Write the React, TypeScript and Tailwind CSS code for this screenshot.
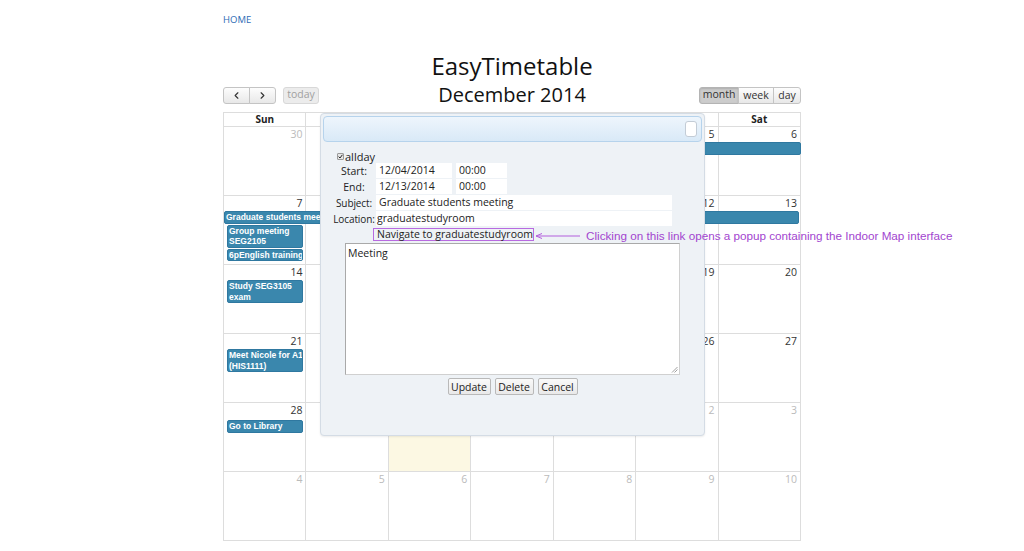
import { ReactElement } from "react";
import { ChevronLeft, ChevronRight } from "lucide-react";

type Ev = { title: ReactElement | string; col: number; span: number; row: number; cls?: string };

type Week = { days: { n: number; other?: boolean; today?: boolean }[]; events: Ev[] };

const colStart: Record<number, string> = {
  1: "col-start-1",
  2: "col-start-2",
  3: "col-start-3",
  4: "col-start-4",
  5: "col-start-5",
  6: "col-start-6",
  7: "col-start-7",
};

const colSpan: Record<number, string> = {
  1: "col-span-1",
  2: "col-span-2",
  3: "col-span-3",
  4: "col-span-4",
  5: "col-span-5",
  6: "col-span-6",
  7: "col-span-7",
};

const rowStart: Record<number, string> = {
  2: "row-start-2",
  3: "row-start-3",
  4: "row-start-4",
};

const weeks: Week[] = [
  {
    days: [{ n: 30, other: true }, { n: 1 }, { n: 2 }, { n: 3 }, { n: 4 }, { n: 5 }, { n: 6 }],
    events: [{ title: "Graduate students meeting", col: 5, span: 3, row: 2, cls: "ml-[2px]" }],
  },
  {
    days: [{ n: 7 }, { n: 8 }, { n: 9 }, { n: 10 }, { n: 11 }, { n: 12 }, { n: 13 }],
    events: [
      { title: "Graduate students meeting", col: 1, span: 7, row: 2, cls: "mr-[2px]" },
      {
        title: (
          <>
            Group meeting
            <br />
            SEG2105
          </>
        ),
        col: 1,
        span: 1,
        row: 3,
        cls: "mx-[3px]",
      },
      { title: "6pEnglish training", col: 1, span: 1, row: 4, cls: "mx-[3px]" },
    ],
  },
  {
    days: [{ n: 14 }, { n: 15 }, { n: 16 }, { n: 17 }, { n: 18 }, { n: 19 }, { n: 20 }],
    events: [
      {
        title: (
          <>
            Study SEG3105
            <br />
            exam
          </>
        ),
        col: 1,
        span: 1,
        row: 2,
        cls: "mx-[3px]",
      },
    ],
  },
  {
    days: [{ n: 21 }, { n: 22 }, { n: 23 }, { n: 24 }, { n: 25 }, { n: 26 }, { n: 27 }],
    events: [
      {
        title: (
          <>
            Meet Nicole for A1
            <br />
            (HIS1111)
          </>
        ),
        col: 1,
        span: 1,
        row: 2,
        cls: "mx-[3px]",
      },
    ],
  },
  {
    days: [
      { n: 28 },
      { n: 29 },
      { n: 30, today: true },
      { n: 31 },
      { n: 1, other: true },
      { n: 2, other: true },
      { n: 3, other: true },
    ],
    events: [{ title: "Go to Library", col: 1, span: 1, row: 2, cls: "mx-[3px] mt-[2px]" }],
  },
  {
    days: [4, 5, 6, 7, 8, 9, 10].map((n) => ({ n, other: true })),
    events: [],
  },
];

const dayNames = ["Sun", "Mon", "Tue", "Wed", "Thu", "Fri", "Sat"];

const btn =
  "h-[17px] border border-[#c4c4c4] bg-gradient-to-b from-[#fdfdfd] to-[#e8e8e8] text-[10.5px] leading-none text-[#333] flex items-center justify-center";

const formBtn =
  "flex h-[17px] items-center justify-center rounded-[2px] border border-[#b9b9b9] bg-gradient-to-b from-[#fafafa] to-[#e9e9e9]";

const App = (): ReactElement => {
  return (
    <div className="relative min-h-[551px] overflow-hidden bg-white font-['Open_Sans',sans-serif] text-[#333]">
      <div className="ml-[223px] w-[578px]">
        {/* top link */}
        <div className="pt-[14px] h-[26px] text-[9.5px] leading-[12px] text-[#2d6cb5]">HOME</div>

        <h1 className="mt-[26px] h-[28px] text-center text-[24px] leading-[28px] text-[#111]">EasyTimetable</h1>

        {/* toolbar */}
        <div className="mt-[3px] grid h-[24px] grid-cols-[1fr_auto_1fr] items-center">
          <div className="flex items-center gap-[7px]">
            <div className="flex">
              <div className={`${btn} w-[27px] rounded-l-[3px]`}>
                <ChevronLeft size={11} strokeWidth={2.5} />
              </div>
              <div className={`${btn} w-[27px] -ml-px rounded-r-[3px]`}>
                <ChevronRight size={11} strokeWidth={2.5} />
              </div>
            </div>
            <div className="flex h-[17px] w-[36px] items-center justify-center rounded-[3px] border border-[#d8d8d8] bg-[#ececec] text-[10.5px] text-[#a0a0a0]">
              today
            </div>
          </div>
          <h2 className="text-center text-[20px] leading-[24px] text-[#111]">December 2014</h2>
          <div className="flex justify-end">
            <div className="flex h-[17px] w-[40px] items-center justify-center rounded-l-[3px] border border-[#b4b4b4] bg-[#cccccc] text-[10.5px] text-[#333] shadow-[inset_0_1px_2px_rgba(0,0,0,0.15)]">
              month
            </div>
            <div className={`${btn} -ml-px w-[36px]`}>week</div>
            <div className={`${btn} -ml-px w-[28px] rounded-r-[3px]`}>day</div>
          </div>
        </div>

        {/* calendar grid */}
        <div className="mt-[5px] border-l border-t border-[#dddddd]">
          <div className="grid h-[14px] grid-cols-7">
            {dayNames.map((d) => (
              <div
                key={d}
                className="border-b border-r border-[#dddddd] text-center text-[10px] font-bold leading-[13px] text-[#222]"
              >
                {d}
              </div>
            ))}
          </div>
          {weeks.map((w, wi) => (
            <div key={wi} className="grid h-[69px] grid-cols-7 grid-rows-[15px_auto_auto_auto_1fr]">
              {w.days.map((d, di) => (
                <div
                  key={di}
                  className={`${colStart[di + 1]} row-span-full border-b border-r border-[#dddddd] ${
                    d.today ? "bg-[#fcf8e3]" : "bg-white"
                  }`}
                >
                  <div
                    className={`pr-[3px] pt-[1px] text-right text-[10.5px] leading-[13px] ${
                      d.other ? "text-[#bbbbbb]" : "text-[#333]"
                    }`}
                  >
                    {d.n}
                  </div>
                </div>
              ))}
              {w.events.map((e, ei) => (
                <div
                  key={ei}
                  className={`${colStart[e.col]} ${colSpan[e.span]} ${rowStart[e.row]} mb-[1px] overflow-hidden whitespace-nowrap rounded-[2px] border border-[#2f78a0] bg-[#3a87ad] px-[1px] font-['Liberation_Sans',sans-serif] text-[8.5px] font-bold leading-[10.5px] text-white ${
                    e.cls ?? ""
                  }`}
                >
                  {e.title}
                </div>
              ))}
            </div>
          ))}
        </div>
      </div>

      {/* event editor popup */}
      <div className="absolute left-[320px] top-[113px] h-[323px] w-[385px] rounded-[4px] border border-[#d4dce5] bg-[#eef2f6] p-[2px] shadow-[0_1px_2px_rgba(0,0,0,0.08)]">
        <div className="flex h-[26px] items-center justify-end rounded-[4px] border border-[#b6d3ec] bg-gradient-to-b from-[#eef5fc] to-[#d9e9f7] pr-[4px]">
          <div className="h-[16px] w-[12px] rounded-[3px] border border-[#c3ccd6] bg-white" />
        </div>

        <div className="pl-[9px] pt-[8px] text-[10.5px] leading-[12px] text-[#222]">
          <div className="flex h-[13px] items-center gap-[1px] pl-[5px]">
            <div className="flex h-[7px] w-[7px] items-center justify-center rounded-[1px] border border-[#9a9a9a] bg-[#e6e6e6]">
              <svg width="5" height="5" viewBox="0 0 5 5">
                <path d="M0.6 2.6 L2 4 L4.4 0.8" fill="none" stroke="#222" strokeWidth="1" />
              </svg>
            </div>
            <span className="text-[11px]">allday</span>
          </div>

          <div className="grid grid-cols-[44px_auto] items-center gap-y-[1px]">
            <div className="text-center">Start:</div>
            <div className="flex h-[15px] gap-[4px]">
              <div className="w-[76px] bg-white pl-[3px] leading-[15px]">12/04/2014</div>
              <div className="w-[51px] bg-white pl-[3px] leading-[15px]">00:00</div>
            </div>
            <div className="text-center">End:</div>
            <div className="flex h-[15px] gap-[4px]">
              <div className="w-[76px] bg-white pl-[3px] leading-[15px]">12/13/2014</div>
              <div className="w-[51px] bg-white pl-[3px] leading-[15px]">00:00</div>
            </div>
            <div className="text-center text-[10px] tracking-[-0.1px]">Subject:</div>
            <div className="h-[15px] w-[296px] bg-white pl-[3px] leading-[15px]">Graduate students meeting</div>
            <div className="text-center text-[10px] tracking-[-0.1px]">Location:</div>
            <div className="h-[15px] w-[296px] bg-white pl-[1px] leading-[15px]">graduatestudyroom</div>
          </div>

          <div className="ml-[41px] mt-[2px] h-[13px] w-[161px] border border-[#b86ae0] pl-[3px] text-[10.5px] leading-[11px] text-[#222]">
            Navigate to graduatestudyroom
          </div>

          <div className="relative ml-[13px] mt-[2px] h-[132px] w-[335px] border border-[#a9a9a9] border-b-[#d0d0d0] border-r-[#d0d0d0] bg-white pl-[2px] pt-[3px] text-[10.5px]">
            Meeting
            <svg className="absolute bottom-[1px] right-[1px]" width="7" height="7" viewBox="0 0 7 7">
              <path d="M1 6.5 L6.5 1 M3.5 6.5 L6.5 3.5" stroke="#888" strokeWidth="0.8" />
            </svg>
          </div>

          <div className="ml-[13px] mt-[3px] flex w-[335px] justify-center gap-[4px]">
            <div className={`${formBtn} w-[43px]`}>Update</div>
            <div className={`${formBtn} w-[39px]`}>Delete</div>
            <div className={`${formBtn} w-[40px]`}>Cancel</div>
          </div>
        </div>
      </div>

      {/* annotation */}
      <div className="absolute left-[535px] top-[228px] flex h-[16px] items-center gap-[5px]">
        <svg width="46" height="10" viewBox="0 0 46 10">
          <path d="M1 5 H45" stroke="#b25fdc" strokeWidth="1" />
          <path d="M1 5 L7 2.5 M1 5 L7 7.5" stroke="#b25fdc" strokeWidth="1" fill="none" />
        </svg>
        <span className="whitespace-nowrap font-['Liberation_Sans',sans-serif] text-[11.7px] text-[#a245cf]">
          Clicking on this link opens a popup containing the Indoor Map interface
        </span>
      </div>
    </div>
  );
};

export default App;
